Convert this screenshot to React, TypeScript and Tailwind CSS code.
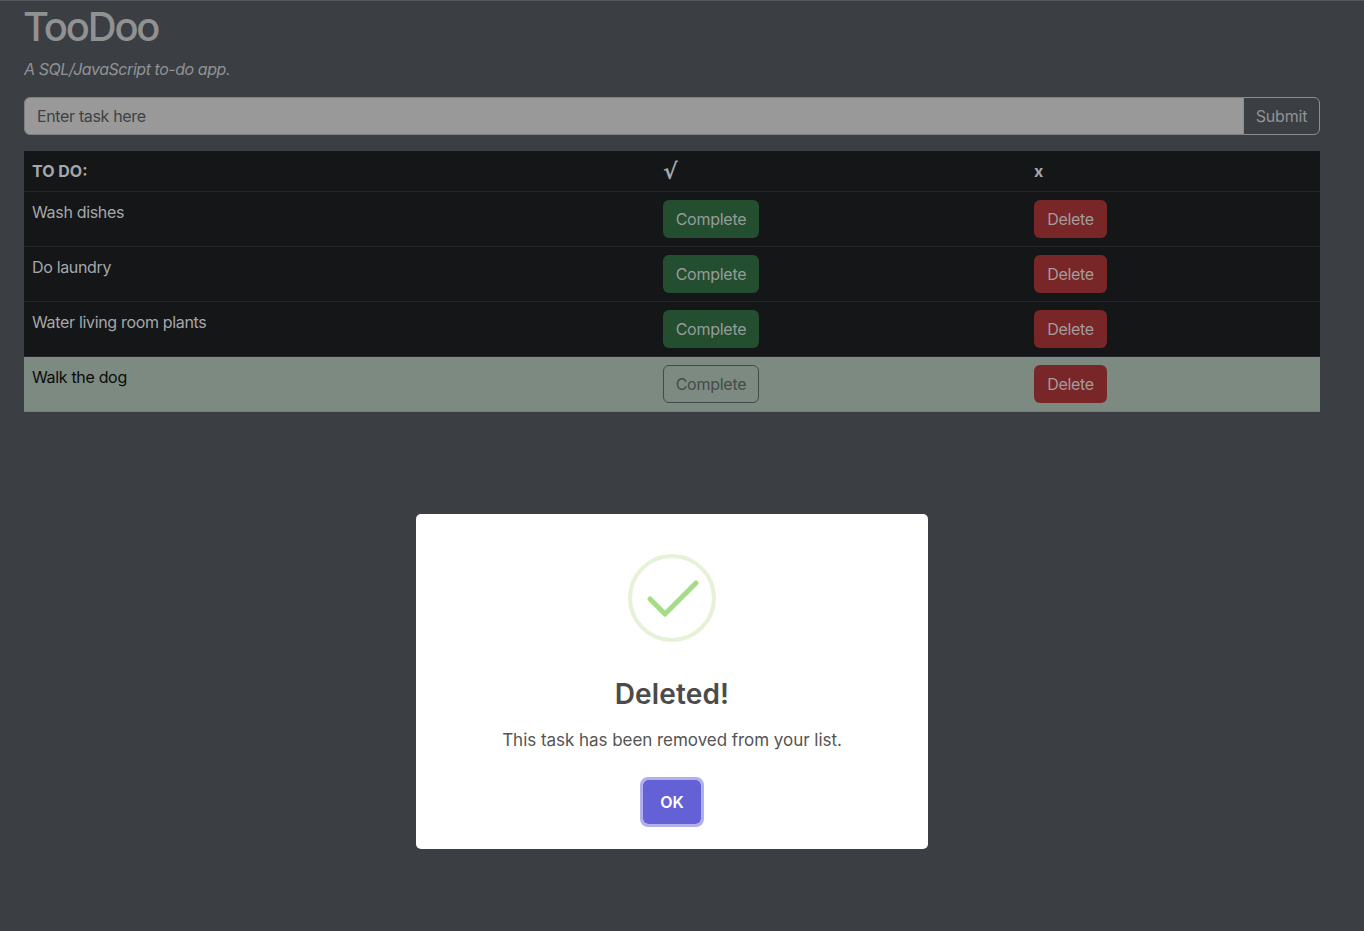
export default function App() {
  const rows = ["Wash dishes", "Do laundry", "Water living room plants"];
  const complete = "h-[38px] w-[96px] rounded-md bg-[#234e30] text-[#979c98] text-base tracking-[-0.25px]";
  const del = "h-[38px] w-[73px] rounded-md bg-[#792628] text-[#a39c9c] text-base tracking-[-0.3px]";
  return (
    <div className="min-h-[931px] w-full bg-[#3b3e43] border-t border-[#55585c] [font-family:Inter,'Liberation_Sans',sans-serif]">
      <div className="w-[1344px] px-6 overflow-hidden h-[930px]">
        <h1 className="mt-[2px] mb-[6px] -ml-px text-[40px] leading-[48px] font-medium tracking-[-2.2px] text-[#909192]">TooDoo</h1>
        <p className="text-base leading-6 italic tracking-[-0.45px] text-[#909396] mb-4">A SQL/JavaScript to-do app.</p>
        <div className="flex h-[38px] mb-4">
          <div className="flex-1 bg-[#999999] rounded-l-md border border-[#7d7f81] px-3 flex items-center text-[#3f4144] text-base tracking-[-0.35px]">
            Enter task here
          </div>
          <button className="w-[77px] rounded-r-md border border-[#8b8e90] bg-[#3b3e43] text-[#909396] text-base tracking-[-0.15px] -ml-px">Submit</button>
        </div>
        <div className="bg-[#141618] text-[#a5a8aa] text-base">
          <div className="grid grid-cols-[631px_371px_294px] h-[41px] border-b border-[#24272a] font-bold items-center px-2">
            <div>TO DO:</div>
            <div className="font-bold italic text-[22px] leading-none pt-[2px] [font-family:'DejaVu_Sans',sans-serif]">√</div>
            <div>x</div>
          </div>
          {rows.map((r) => (
            <div key={r} className="grid grid-cols-[631px_371px_294px] h-[55px] border-b border-[#24272a] px-2 pt-2">
              <div className="leading-6 tracking-[-0.33px]">{r}</div>
              <div><button className={complete}>Complete</button></div>
              <div><button className={del}>Delete</button></div>
            </div>
          ))}
          <div className="grid grid-cols-[631px_371px_294px] h-[55px] bg-[#7c8a81] border-b border-[#747f78] px-2 pt-2">
            <div className="leading-6 tracking-[-0.33px] text-[#0a0c0b]">Walk the dog</div>
            <div><button className="h-[38px] w-[96px] rounded-md border border-[#454a4c] text-[#454a4c] text-base tracking-[-0.25px]">Complete</button></div>
            <div><button className={del}>Delete</button></div>
          </div>
        </div>
        <div className="mx-auto mt-[102px] w-[512px] h-[335px] bg-white rounded-[5px] flex flex-col items-center pt-10">
          <svg width="88" height="88" viewBox="0 0 88 88" fill="none">
            <circle cx="44" cy="44" r="42" stroke="#e5f2d8" strokeWidth="4" />
            <path d="M22 45 L37 60 L68 29" stroke="#a5dc86" strokeWidth="5" strokeLinecap="round" strokeLinejoin="round" />
          </svg>
          <h2 className="mt-[36px] text-[28px] leading-8 font-semibold tracking-[0.15px] text-[#4b4b4b]">Deleted!</h2>
          <p className="mt-[18px] text-[17px] leading-6 tracking-[-0.04px] text-[#545454]">This task has been removed from your list.</p>
          <button className="mt-[28px] w-[58px] h-[44px] rounded-[5px] bg-[#6460d6] text-white text-base font-semibold outline-[3px] outline-[#b2b0eb]">OK</button>
        </div>
      </div>
    </div>
  );
}
